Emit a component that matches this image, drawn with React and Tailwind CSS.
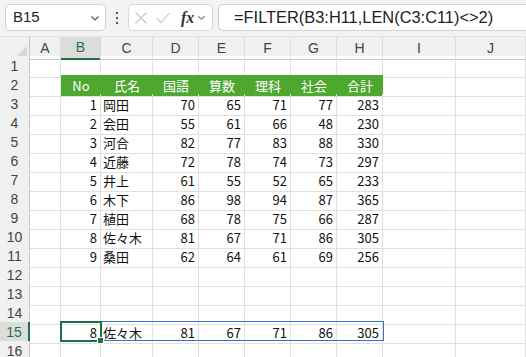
import React from 'react';

const colLetters = ['A', 'B', 'C', 'D', 'E', 'F', 'G', 'H', 'I', 'J'];
const heads = ['No', '氏名', '国語', '算数', '理科', '社会', '合計'];
const data = [
  [1, '岡田', 70, 65, 71, 77, 283],
  [2, '会田', 55, 61, 66, 48, 230],
  [3, '河合', 82, 77, 83, 88, 330],
  [4, '近藤', 72, 78, 74, 73, 297],
  [5, '井上', 61, 55, 52, 65, 233],
  [6, '木下', 86, 98, 94, 87, 365],
  [7, '植田', 68, 78, 75, 66, 287],
  [8, '佐々木', 81, 67, 71, 86, 305],
  [9, '桑田', 62, 64, 61, 69, 256],
];

// rows 1..16 of the sheet
const rows = [
  null,
  'head',
  ...data,
  null,
  null,
  null,
  [8, '佐々木', 81, 67, 71, 86, 305],
  null,
];

const cellFont = { fontFamily: '"Noto Sans CJK JP", "Noto Sans", sans-serif' };

const Chevron = ({ className }) => (
  <svg className={className} viewBox="0 0 12 12" fill="none" stroke="currentColor" strokeWidth="1.2">
    <path d="M2.5 4.5 L6 8 L9.5 4.5" />
  </svg>
);

const Toolbar = () => (
  <div className="h-[37px] bg-[#f3f3f3] flex items-start pt-[4px] pl-[5px] gap-0 border-b border-[#e3e3e3]">
    <div className="w-[101px] h-[27px] bg-white border border-[#d1d1d1] rounded-[5px] flex items-center pl-[7px] pr-[4px]">
      <span className="flex-1 text-[15px] text-[#222]" style={{ fontFamily: '"Liberation Sans", Arial, sans-serif' }}>B15</span>
      <Chevron className="w-[12px] h-[12px] text-[#555]" />
    </div>
    <div className="w-[22px] h-[27px] flex items-center justify-center">
      <svg className="w-[4px] h-[14px]" viewBox="0 0 4 14" fill="#555">
        <rect x="1" y="1" width="2" height="2" />
        <rect x="1" y="6" width="2" height="2" />
        <rect x="1" y="11" width="2" height="2" />
      </svg>
    </div>
    <div className="w-[85px] h-[27px] bg-white border border-[#d8d8d8] rounded-[5px] flex items-center pl-[5px]">
      <svg className="w-[14px] h-[14px] text-[#c4c4c4]" viewBox="0 0 14 14" fill="none" stroke="currentColor" strokeWidth="1.1">
        <path d="M1.5 1.5 L12.5 12.5 M12.5 1.5 L1.5 12.5" />
      </svg>
      <svg className="w-[16px] h-[14px] ml-[7px] text-[#c4c4c4]" viewBox="0 0 16 14" fill="none" stroke="currentColor" strokeWidth="1.1">
        <path d="M1.5 7 L6 11.5 L14.5 2" />
      </svg>
      <span className="ml-[10px] text-[16px] italic font-bold text-[#333] leading-none" style={{ fontFamily: '"Liberation Serif", serif' }}>fx</span>
      <Chevron className="w-[11px] h-[11px] ml-[2px] text-[#777]" />
    </div>
    <div className="ml-[5px] flex-1 h-[27px] bg-white border border-r-0 border-[#d1d1d1] rounded-l-[5px] flex items-center pl-[15px]">
      <span className="text-[16.4px] text-[#222] whitespace-nowrap" style={{ fontFamily: '"Liberation Sans", Arial, sans-serif' }}>
        =FILTER(B3:H11,LEN(C3:C11)&lt;&gt;2)
      </span>
    </div>
  </div>
);

const gridCols = 'grid grid-cols-[30px_31px_40px_52px_46px_46px_46px_46px_46px_73px_1fr]';

const ColumnHeader = () => (
  <div className={`${gridCols} h-[19px] bg-[#f0f0f0]`}>
    <div className="relative border-r border-b border-[#c6c6c6]">
      <svg className="absolute right-[2px] bottom-[2px] w-[11px] h-[11px]" viewBox="0 0 11 11">
        <polygon points="11,0 11,11 0,11" fill="#d6d6d6" />
      </svg>
    </div>
    {colLetters.map((l) => (
      <div
        key={l}
        className={
          l === 'B'
            ? 'flex items-center justify-center bg-[#dcdcdc] text-[#1e7145] border-r border-[#d6d6d6] border-b-2 border-b-[#1e7145] text-[14px]'
            : 'flex items-center justify-center text-[#444] border-r border-[#dedede] border-b border-b-[#c6c6c6] text-[14px]'
        }
        style={{ fontFamily: '"Liberation Sans", Arial, sans-serif' }}
      >
        {l}
      </div>
    ))}
  </div>
);

const Cell = ({ col, value, head }) => {
  if (head) {
    const green = col >= 1 && col <= 7;
    return (
      <div
        className={
          green
            ? 'bg-[#4ea72e] text-white flex items-center justify-center border-b border-[#e0e0e0] text-[13px]'
            : 'border-r border-b border-[#e0e0e0]'
        }
        style={cellFont}
      >
        {green ? heads[col - 1] : ''}
      </div>
    );
  }
  const align = col === 2 ? 'justify-start pl-[2px]' : 'justify-end pr-[3px]';
  return (
    <div className={`flex items-center ${align} border-r border-b border-[#e0e0e0] text-[13px] text-[#111] whitespace-nowrap overflow-visible`} style={cellFont}>
      {value}
    </div>
  );
};

const Row = ({ n, content }) => {
  const sel = n === 15;
  return (
    <div className={`${gridCols} h-[19px]`}>
      <div
        className={
          sel
            ? 'bg-[#dcdcdc] text-[#1e7145] flex items-center justify-center border-b border-[#d6d6d6] border-r-2 border-r-[#1e7145] text-[14px]'
            : 'bg-[#f0f0f0] text-[#444] flex items-center justify-center border-b border-[#dedede] border-r border-r-[#c6c6c6] text-[14px]'
        }
        style={{ fontFamily: '"Liberation Sans", Arial, sans-serif' }}
      >
        {n}
      </div>
      {colLetters.map((l, i) => {
        if (content === 'head') return <Cell key={l} col={i} head />;
        let v = '';
        if (content && i >= 1 && i <= 7) v = content[i - 1];
        return <Cell key={l} col={i} value={v} />;
      })}
    </div>
  );
};

export default function App() {
  return (
    <div className="w-[526px] h-[357px] overflow-hidden bg-white">
      <Toolbar />
      <ColumnHeader />
      <div className="relative">
        {rows.map((r, i) => (
          <Row key={i} n={i + 1} content={r} />
        ))}
        {/* spill range */}
        <div className="absolute left-[60px] top-[265px] w-[324px] h-[20px] border border-[#3b6fc6] pointer-events-none" />
        {/* active cell */}
        <div className="absolute left-[60px] top-[265px] w-[42px] h-[21px] border-2 border-[#1e7145] pointer-events-none" />
        <div className="absolute left-[97px] top-[281px] w-[7px] h-[7px] bg-[#1e7145] border border-white pointer-events-none" />
      </div>
    </div>
  );
}
